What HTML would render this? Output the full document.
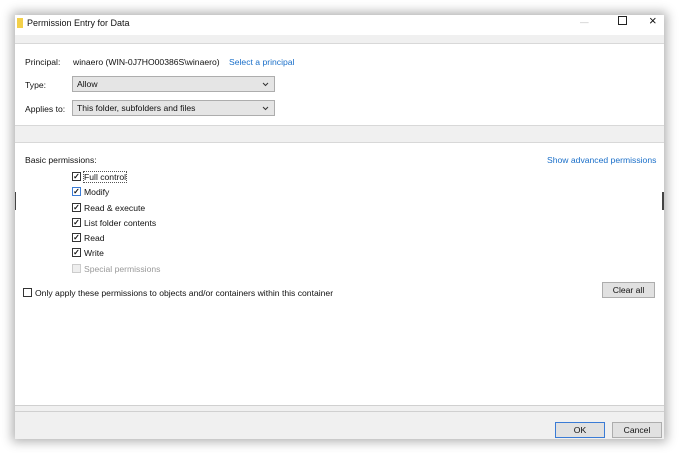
<!DOCTYPE html>
<html><head><style>
*{margin:0;padding:0;box-sizing:border-box}
body{width:679px;height:453px;background:#fff;position:relative;overflow:hidden;font-family:"Liberation Sans",sans-serif;font-size:8.6px;color:#111}
.a{position:absolute;white-space:nowrap}
#win{position:absolute;left:15px;top:15px;width:649px;height:424px;background:#fff;box-shadow:0 0 10px 3px rgba(0,0,0,.3)}
.sel{position:absolute;height:16px;border:1px solid #adadad;background:#e5e5e5;padding:2px 4px;line-height:11px}
.sel svg{position:absolute;right:5px;top:5px}
.cb{position:absolute;width:9px;height:9px;border:1px solid #333;background:#fff;font-size:8px;line-height:7px;text-align:center;font-weight:bold}
.btn{position:absolute;height:16px;border:1px solid #adadad;background:#e1e1e1;text-align:center;line-height:14px}
.blue{color:#1a6fc9}
</style></head><body>
<div id="win">
<div class="a" style="left:2px;top:3px;width:6px;height:10px;background:#f3d04a"></div>
<div class="a" style="left:12px;top:3px;font-size:9px">Permission Entry for Data</div>
<div class="a" style="left:565px;top:2px;color:#bbb">—</div>
<div class="a" style="left:603px;top:1px;width:9px;height:9px;border:1px solid #222"></div>
<div class="a" style="left:634px;top:-2px;font-size:13px">×</div>
<div class="a" style="left:0;top:20px;width:649px;height:9px;background:#f0f0f0;border-bottom:1px solid #d8d8d8"></div>
<div class="a" style="left:10px;top:42px">Principal:</div>
<div class="a" style="left:58px;top:42px">winaero (WIN-0J7HO00386S\winaero)</div>
<div class="a blue" style="left:214px;top:42px">Select a principal</div>
<div class="a" style="left:10px;top:65px">Type:</div>
<div class="sel" style="left:57px;top:61px;width:203px">Allow<svg width="7" height="5"><path d="M1 1l2.5 2.5L6 1" stroke="#333" fill="none"/></svg></div>
<div class="a" style="left:10px;top:89px">Applies to:</div>
<div class="sel" style="left:57px;top:85px;width:203px">This folder, subfolders and files<svg width="7" height="5"><path d="M1 1l2.5 2.5L6 1" stroke="#333" fill="none"/></svg></div>
<div class="a" style="left:0;top:110px;width:649px;height:18px;background:#f0f0f0;border-top:1px solid #d8d8d8;border-bottom:1px solid #d8d8d8"></div>
<div class="a" style="left:10px;top:140px">Basic permissions:</div>
<div class="a blue" style="left:532px;top:140px">Show advanced permissions</div>
<div class="cb" style="left:57px;top:157px">✓</div><div class="a" style="left:69px;top:157px;outline:1px dotted #555">Full control</div>
<div class="cb" style="left:57px;top:172px;border-color:#3a7bd5">✓</div><div class="a" style="left:69px;top:172px">Modify</div>
<div class="cb" style="left:57px;top:188px">✓</div><div class="a" style="left:69px;top:188px">Read &amp; execute</div>
<div class="cb" style="left:57px;top:203px">✓</div><div class="a" style="left:69px;top:203px">List folder contents</div>
<div class="cb" style="left:57px;top:218px">✓</div><div class="a" style="left:69px;top:218px">Read</div>
<div class="cb" style="left:57px;top:233px">✓</div><div class="a" style="left:69px;top:233px">Write</div>
<div class="cb" style="left:57px;top:249px;border-color:#ccc;background:#eee"></div><div class="a" style="left:69px;top:249px;color:#999">Special permissions</div>
<div class="cb" style="left:8px;top:273px"></div><div class="a" style="left:20px;top:273px">Only apply these permissions to objects and/or containers within this container</div>
<div class="btn" style="left:587px;top:267px;width:53px">Clear all</div>
<div class="a" style="left:0;top:390px;width:649px;height:34px;background:#f0f0f0;border-top:1px solid #d0d0d0"></div>
<div class="a" style="left:0;top:396px;width:649px;border-top:1px solid #d0d0d0"></div>
<div class="btn" style="left:540px;top:407px;width:50px;border-color:#3a7bd5">OK</div>
<div class="btn" style="left:597px;top:407px;width:50px">Cancel</div>
</div>
<div class="a" style="left:15px;top:192px;width:1px;height:18px;background:#444"></div>
<div class="a" style="left:662px;top:192px;width:2px;height:18px;background:#444"></div>
</body></html>
